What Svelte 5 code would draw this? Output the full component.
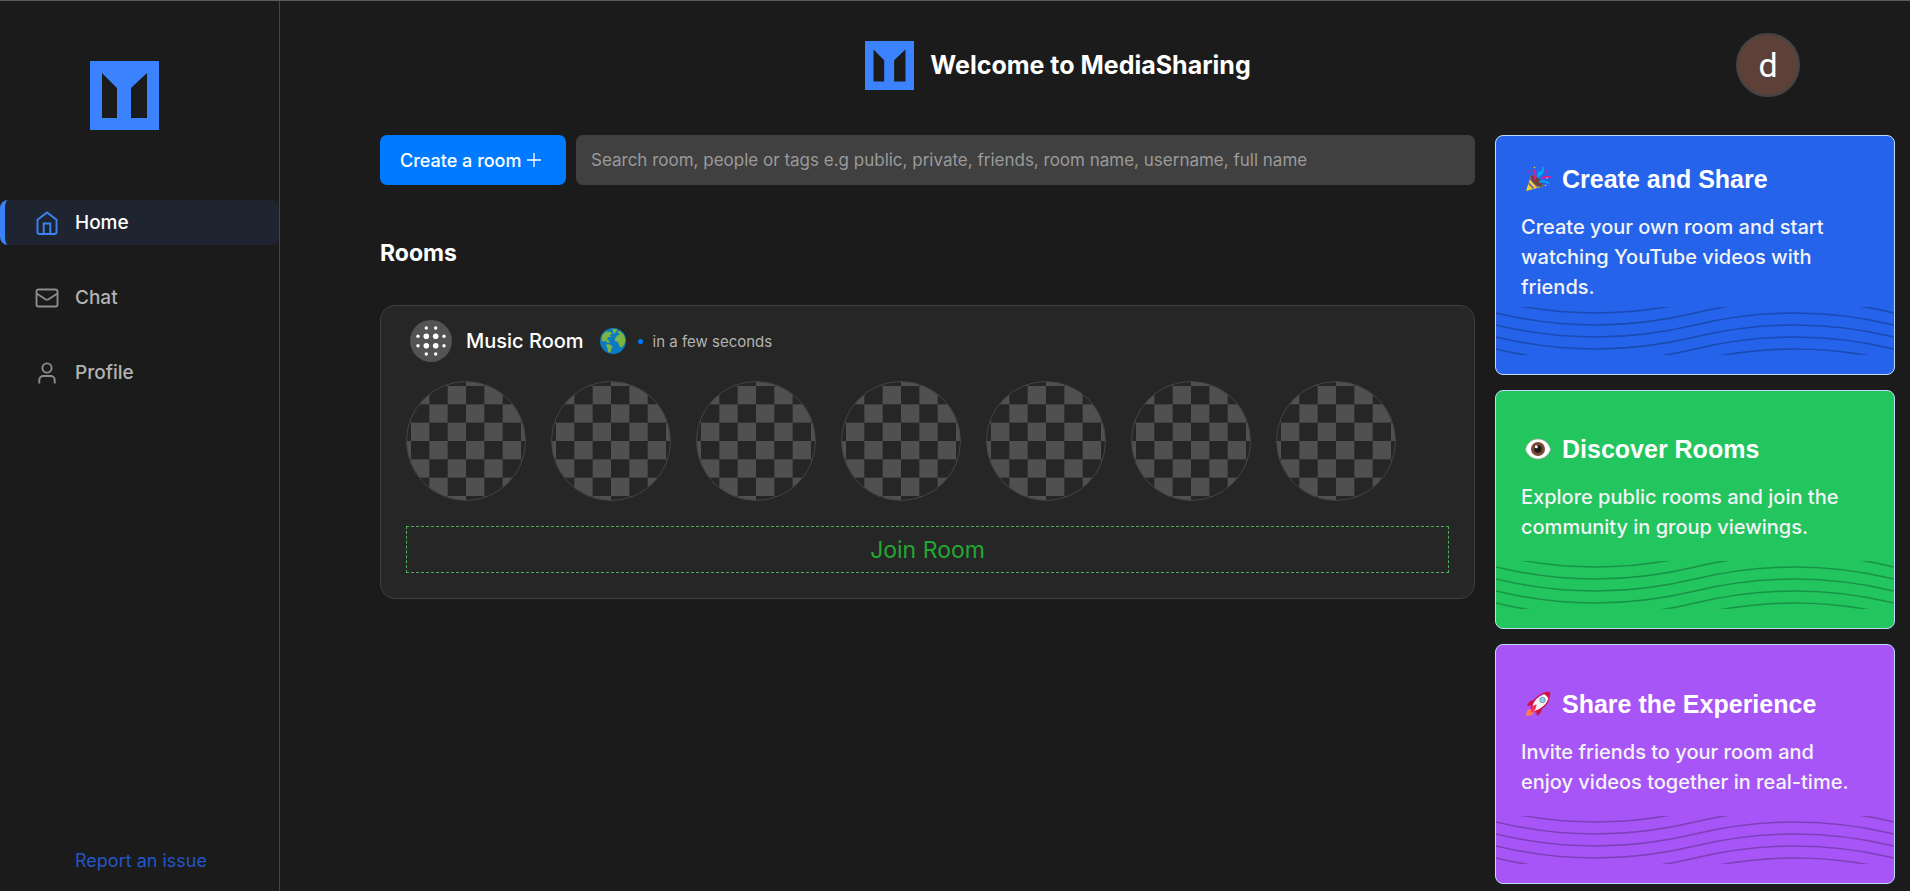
<script>
	const links = [
		{name: 'Home', icon: 'home', active: true},
		{name: 'Chat', icon: 'mail', active: false},
		{name: 'Profile', icon: 'user', active: false}
	];

	const cards = [
		{title: 'Create and Share', icon: 'party', color: 'blue', text: 'Create your own room and start watching YouTube videos with friends.'},
		{title: 'Discover Rooms', icon: 'eye', color: 'green', text: 'Explore public rooms and join the community in group viewings.'},
		{title: 'Share the Experience', icon: 'rocket', color: 'purple', text: 'Invite friends to your room and enjoy videos together in real-time.'}
	];

	const rooms = [{name: 'Music Room', time: 'in a few seconds', seats: 7}];
	const waves = [-6, 6, 18, 30, 42, 54];

	// checkerboard for an empty seat, 6 squares across plus the cut ones at the rim
	const squares = [];
	for (let row = -1; row < 7; row++) {
		for (let col = -1; col < 7; col++) {
			if ((row + col) % 2 === 0) {
				squares.push([col, row]);
			}
		}
	}

	let search = $state('');
</script>

{#snippet logo()}
	<svg class="logo" viewBox="0 0 69 69" aria-hidden="true">
		<path fill="#3b82ff" fill-rule="evenodd" d="M0 0H69V69H0ZM12 12V57H27V27ZM57 12V57H41V27Z" />
	</svg>
{/snippet}

<div class="app">
	<aside class="sidebar">
		<div class="brand">{@render logo()}</div>
		<nav>
			{#each links as link}
				<a href="#{link.icon}" class="nav-link" class:active={link.active}>
					<svg viewBox="0 0 26 26" class="nav-icon" aria-hidden="true">
						{#if link.icon === 'home'}
							<path d="M3.500 9.800 13 2.500l9.500 7.300v12.200a2 2 0 0 1-2 2h-15a2 2 0 0 1-2-2z M9.700 24V13.500h6.600V24" />
						{:else if link.icon === 'mail'}
							<rect x="2.500" y="4.500" width="21" height="17" rx="2" />
							<path d="M2.500 8.500 11.500 14.200q1.500.900 3 0L23.500 8.500" />
						{:else}
							<circle cx="13" cy="8" r="4.600" />
							<path d="M5.300 23.500V20a4 4 0 0 1 4-4h7.400a4 4 0 0 1 4 4v3.500" />
						{/if}
					</svg>
					<span>{link.name}</span>
				</a>
			{/each}
		</nav>
		<a href="#report" class="report">Report an issue</a>
	</aside>

	<div class="page">
		<header>
			<div class="title">
				{@render logo()}
				<h1>Welcome to MediaSharing</h1>
			</div>
			<button class="avatar" aria-label="Account">d</button>
		</header>

		<div class="content">
			<main>
				<div class="toolbar">
					<button class="create">
						Create a room
						<svg viewBox="0 0 16 16" aria-hidden="true"><path d="M8 1v14M1 8h14" /></svg>
					</button>
					<input type="search" aria-label="Search" bind:value={search} placeholder="Search room, people or tags e.g public, private, friends, room name, username, full name" />
				</div>

				<h2>Rooms</h2>

				{#each rooms as room}
					<section class="room">
						<div class="room-head">
							<svg class="room-icon" viewBox="0 0 42 42" aria-hidden="true">
								<circle cx="21" cy="21" r="21" fill="#535353" />
								<g fill="#fff">
									{#each [16.3, 25.7] as a}
										{#each [16.3, 25.7] as b}
											<circle cx={a} cy={b} r="2.800" />
										{/each}
										{#each [8, 34] as b}
											<circle cx={a} cy={b} r="1.700" />
											<circle cx={b} cy={a} r="1.700" />
										{/each}
									{/each}
								</g>
							</svg>
							<h3>{room.name}</h3>
							<svg class="globe" viewBox="0 0 26 26" aria-hidden="true">
								<circle cx="13" cy="13" r="13" fill="#0a7bc0" />
								<g fill="#7cb342">
									<path d="M2 8Q4 4 7 3.500L11 4 12 6 10 7 11 9 8 9 7 11 8 12 10 14 8 15 5 12.500 3 14 1.500 11Z" />
									<path d="M12 1.200 16.500.800 17 2.500 15 5 13.500 6 13 3.500Z" />
									<path d="M17 4 20 3 24 7 25.500 12 24 17 21 20 19 17 18 14 15 13 15 10 18 7 20 6Z" />
									<path d="M6 17 8 16 11 17 12.500 19 11 22 10.500 24.500 8 24 7.500 20Z" />
								</g>
							</svg>
							<span class="dot"></span>
							<span class="time">{room.time}</span>
						</div>
						<div class="seats">
							{#each {length: room.seats} as _}
								<div class="seat">
									<svg viewBox="-12 -12 354 354" aria-hidden="true">
										{#each squares as [x, y]}
											<rect x={x * 55} y={y * 55} width="55" height="55" />
										{/each}
									</svg>
								</div>
							{/each}
						</div>
						<button class="join">Join Room</button>
					</section>
				{/each}
			</main>

			<aside class="cards">
				{#each cards as card}
					<article class="card {card.color}">
						<div class="card-body">
							<h2>
								<svg viewBox="0 0 26 26" aria-hidden="true">
									{#if card.icon === 'party'}
										<path fill="#ffca28" d="M6 9.500Q8 7.500 14 14T16 21L1 25Z" />
										<path stroke="#5c6bc0" stroke-width="1.800" d="m3.500 17 5 5.300M5 12.500l8 9" />
										<ellipse cx="11.500" cy="15" rx="3.300" ry="7.800" transform="rotate(-45 11.500 15)" fill="#6d4337" />
										<g fill="none" stroke-width="1.800" stroke-linecap="round">
											<path stroke="#f5128d" d="M9.500 13Q12 8 8.500 4M18 12q3-2 7-1" />
											<path stroke="#03a9f4" d="M13 11q0-5 2-5t0 3q3-1 3-7M15 16q4-2 8 1" />
										</g>
										<g fill="#f5128d"><circle cx="4" cy="5.500" r="1" /><circle cx="21.500" cy="5.500" r="1" /></g>
										<g fill="#ffca28"><circle cx="9.500" cy="1.500" r=".8" /><circle cx="20.500" cy="19.500" r=".8" /><circle cx="22" cy="12" r=".8" /></g>
									{:else if card.icon === 'eye'}
										<path fill="#fff" stroke="#a9a39b" stroke-width=".8" d="M.500 13.500C2 7 7 3 13 3s11 4 12.500 10.500C24 19 19 23 13 23S2 19 .500 13.500Z" />
										<circle cx="13" cy="13" r="7" fill="#7b4634" />
										<circle cx="13" cy="13" r="3.800" fill="#1d1a1a" />
										<circle cx="11.300" cy="10.800" r="1.500" fill="#fff" />
									{:else}
										<path fill="#ff7f50" d="M1 25Q1 19 5 18L9 21Q8 25 1 25Z" />
										<path fill="#cf1240" d="M9 9Q4 9 2 15l5-.500ZM17 17q0 5-5 8l-1-6Z" />
										<path fill="#f5f5f5" d="M6 18Q8 6 25 1q0 14-16 20Z" />
										<path fill="#cf1240" d="M17 2.500Q21 0 25 1q1 3-1.500 8Q23 4 17 2.500Z" />
										<path fill="#ff2a60" d="M5.500 18q1-4 6-4.500 0 5-4.500 8.500Z" />
										<circle cx="17.500" cy="9" r="2.700" fill="#81d4fa" stroke="#78909c" stroke-width=".9" />
										<path fill="none" stroke="#cf1240" stroke-width="1.200" d="M6 17Q9 6 18 2.500M9 21Q21 17 24 8" />
									{/if}
								</svg>
								{card.title}
							</h2>
							<p>{card.text}</p>
						</div>
						<svg class="waves" viewBox="0 0 400 48" preserveAspectRatio="none" aria-hidden="true">
							{#each waves as y}
								<path d="M0 {y}Q100 {y + 24} 200 {y}T400 {y}" />
							{/each}
						</svg>
					</article>
				{/each}
			</aside>
		</div>
	</div>
</div>

<style>
	:global(body) {
		margin: 0;
		background: #1b1b1b;
	}

	* {
		box-sizing: border-box;
	}

	.app {
		display: flex;
		min-height: 100vh;
		border-top: 1px solid #5c5c5c;
		background: #1b1b1b;
		color: #fff;
		font-family: Inter, sans-serif;
		font-size: 18px;
	}

	h1, h2, h3, p {
		margin: 0;
	}

	button, input {
		font: inherit;
		color: inherit;
		border: none;
	}

	button {
		cursor: pointer;
	}

	a {
		text-decoration: none;
	}

	.logo {
		display: block;
		width: 100%;
	}

	/* Sidebar */
	.sidebar {
		display: flex;
		flex-direction: column;
		flex: none;
		width: 280px;
		border-right: 1px solid #444;
	}

	.brand {
		width: 69px;
		margin: 60px 0 70px 90px;
	}

	nav {
		display: flex;
		flex-direction: column;
		gap: 30px;
	}

	.nav-link {
		display: flex;
		align-items: center;
		gap: 15px;
		height: 45px;
		padding-left: 29px;
		border-left: 5px solid transparent;
		border-radius: 8px;
		color: #b3b3b3;
		font-size: 19px;
		font-weight: 500;
	}

	.nav-link.active {
		border-left-color: #3b82f6;
		background: #1e2430;
		color: #fff;
	}

	.nav-icon {
		width: 26px;
		height: 26px;
		fill: none;
		stroke: #8c8c8c;
		stroke-width: 1.9;
	}

	.active .nav-icon {
		stroke: #3b82f6;
	}

	.report {
		margin: auto 0 20px 75px;
		color: #2456c4;
		line-height: 20px;
	}

	/* Page */
	.page {
		display: flex;
		flex-direction: column;
		flex: 1;
		min-width: 0;
	}

	header {
		display: flex;
		align-items: center;
		height: 128px;
		padding: 0 110px 0 100px;
	}

	.title {
		display: flex;
		align-items: center;
		gap: 16px;
		margin: 0 auto;
	}

	.title .logo {
		width: 49px;
	}

	h1 {
		font-size: 25px;
		font-weight: 700;
	}

	.avatar {
		width: 64px;
		height: 64px;
		padding: 0;
		border: 2px solid #444;
		border-radius: 50%;
		background: #5d4037;
		font-family: Roboto, sans-serif;
		font-size: 34px;
	}

	.content {
		display: flex;
		flex: 1;
		gap: 20px;
		padding: 6px 15px 7px 100px;
	}

	main {
		flex: 1;
		min-width: 0;
	}

	.toolbar {
		display: flex;
		gap: 10px;
		height: 50px;
	}

	.create {
		display: flex;
		align-items: center;
		gap: 5px;
		flex: none;
		width: 186px;
		padding: 0 20px;
		border-radius: 7px;
		background: #007bff;
		font-weight: 500;
	}

	.create svg {
		width: 16px;
		height: 16px;
		stroke: #fff;
		stroke-width: 1.3;
	}

	input {
		flex: 1;
		min-width: 0;
		padding: 0 15px;
		border-radius: 7px;
		background: #404040;
		font-size: 17px;
	}

	input::placeholder {
		color: #9a9a9a;
	}

	main > h2 {
		margin: 53px 0 37px;
		font-size: 23px;
		font-weight: 700;
		line-height: 30px;
	}

	/* Rooms */
	.room {
		padding: 14px 25px 25px;
		border: 1px solid #404040;
		border-radius: 15px;
		background: #262626;
	}

	.room-head {
		display: flex;
		align-items: center;
		padding-left: 4px;
	}

	.room-icon {
		width: 42px;
		height: 42px;
	}

	h3 {
		margin: 0 16px 0 14px;
		font-size: 20px;
		font-weight: 500;
	}

	.globe {
		width: 26px;
		height: 26px;
	}

	.dot {
		width: 5px;
		height: 5px;
		margin: 0 10px 0 12px;
		border-radius: 50%;
		background: #007bff;
	}

	.time {
		color: #b3b3b3;
		font-size: 15px;
	}

	.seats {
		display: flex;
		gap: 25px;
		margin: 19px 0 25px;
	}

	.seat {
		width: 120px;
		height: 120px;
		border: 1px solid #444;
		border-radius: 50%;
		overflow: hidden;
	}

	.seat svg {
		display: block;
		fill: #505050;
	}

	.join {
		display: block;
		width: 100%;
		height: 47px;
		border: 1px dashed #4caf50;
		background: none;
		color: #22a832;
		font-size: 23px;
	}

	/* Info cards */
	.cards {
		display: flex;
		flex-direction: column;
		flex: none;
		gap: 15px;
		width: 400px;
	}

	.card {
		display: flex;
		flex: 1;
		flex-direction: column;
		padding-bottom: 19px;
		border: 1px solid #bfdbfe;
		border-radius: 8px;
	}

	.blue {
		background: #2563eb;
	}

	.green {
		background: #22c55e;
	}

	.purple {
		background: #a855f7;
	}

	.card-body {
		display: flex;
		flex: 1;
		flex-direction: column;
		justify-content: center;
		gap: 15px;
		padding: 25px 25px 4px;
	}

	.card h2 {
		display: flex;
		align-items: center;
		gap: 11px;
		padding-left: 4px;
		font-family: "Liberation Sans", Arial, sans-serif;
		font-size: 25px;
		font-weight: 700;
		line-height: 36px;
	}

	.card h2 svg {
		width: 26px;
		height: 26px;
	}

	.card p {
		color: #f3f4f6;
		font-size: 20px;
		font-weight: 500;
		line-height: 30px;
	}

	.waves {
		display: block;
		width: 100%;
		height: 48px;
	}

	.waves path {
		fill: none;
		stroke: rgba(0, 0, 0, .25);
		stroke-width: 1.6;
	}
</style>
